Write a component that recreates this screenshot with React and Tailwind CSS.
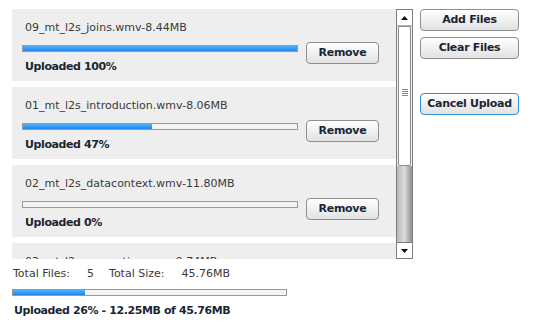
const FILES = [
  { name: '09_mt_l2s_joins.wmv-8.44MB', pct: 100 },
  { name: '01_mt_l2s_introduction.wmv-8.06MB', pct: 47 },
  { name: '02_mt_l2s_datacontext.wmv-11.80MB', pct: 0 },
  { name: '03_mt_l2s_properties.wmv-9.74MB', pct: 0 },
];

const font = { fontFamily: '"DejaVu Sans", Verdana, sans-serif' };

function Bar({ pct, width }) {
  return (
    <div className={`h-[7px] border border-[#9a9a9a] bg-[#f4f4f4] ${width}`}>
      <div
        className="h-full bg-gradient-to-b from-[#4fb3ff] to-[#1c86e8]"
        style={{ width: `${pct}%` }}
      />
    </div>
  );
}

function Btn({ children, blue }) {
  return (
    <button
      type="button"
      className={`h-[22px] rounded-[4px] border text-[11px] font-bold tracking-[-0.3px] text-[#1a2634] bg-gradient-to-b from-white to-[#e2e2e2] ${
        blue ? 'border-[#2f8fd6]' : 'border-[#8e8e8e]'
      }`}
    >
      {children}
    </button>
  );
}

function Item({ name, pct }) {
  return (
    <div className="h-[72px] shrink-0 bg-[#eeeeee] pl-[10px] pt-[12px]">
      <div className="text-[11px] leading-[14px] text-[#3a3a3a] pl-[3px]">{name}</div>
      <div className="mt-[7px] flex">
        <div className="pt-[3px]">
          <Bar pct={pct} width="w-[276px]" />
          <div className="mt-[7px] pl-[3px] text-[11px] leading-[16px] font-bold tracking-[-0.4px] text-[#1a2634]">
            Uploaded {pct}%
          </div>
        </div>
        <div className="ml-[8px] w-[73px] flex flex-col">
          <Btn>Remove</Btn>
        </div>
      </div>
    </div>
  );
}

function Scrollbar() {
  return (
    <div className="w-[17px] h-[250px] flex flex-col border border-[#7d7d7d] bg-[#f0f0f0]">
      <div className="h-[16px] flex items-center justify-center border-b border-[#b5b5b5] bg-white">
        <svg width="7" height="4" viewBox="0 0 7 4"><path d="M3.5 0L7 4H0z" fill="#111" /></svg>
      </div>
      <div className="h-[140px] mx-[1px] border border-[#8a8a8a] rounded-b-[2px] bg-white flex items-center justify-center">
        <div className="flex flex-col gap-[1px] mt-[-8px]">
          {[0, 1, 2, 3].map((i) => (
            <div key={i} className="w-[6px] h-[1px] bg-[#8a8a8a]" />
          ))}
        </div>
      </div>
      <div className="flex-1 bg-gradient-to-r from-[#b9b9b9] via-[#dcdcdc] to-[#8f8f8f]" />
      <div className="h-[16px] flex items-center justify-center border-t border-[#7d7d7d] bg-white">
        <svg width="7" height="4" viewBox="0 0 7 4"><path d="M0 0H7L3.5 4z" fill="#111" /></svg>
      </div>
    </div>
  );
}

export default function App() {
  return (
    <div className="w-[539px] h-[334px] bg-white pl-[12px] pt-[9px]" style={font}>
      <div className="flex">
        <div className="w-[384px] h-[250px] overflow-hidden flex flex-col gap-[6px]">
          {FILES.map((f) => (
            <Item key={f.name} {...f} />
          ))}
        </div>
        <Scrollbar />
        <div className="ml-[7px] w-[99px] flex flex-col">
          <Btn>Add Files</Btn>
          <div className="h-[6px]" />
          <Btn>Clear Files</Btn>
          <div className="h-[34px]" />
          <Btn blue>Cancel Upload</Btn>
        </div>
      </div>
      <div className="mt-[8px] pl-[1px] flex text-[11px] leading-[14px] text-[#3a3a3a]">
        <span>Total Files:</span>
        <span className="ml-[17px]">5</span>
        <span className="ml-[15px]">Total Size:</span>
        <span className="ml-[17px]">45.76MB</span>
      </div>
      <div className="mt-[8px]">
        <Bar pct={26.5} width="w-[275px]" />
      </div>
      <div className="mt-[7px] pl-[2px] text-[11px] leading-[16px] font-bold tracking-[-0.4px] text-[#1a2634]">
        Uploaded 26% - 12.25MB of 45.76MB
      </div>
    </div>
  );
}
